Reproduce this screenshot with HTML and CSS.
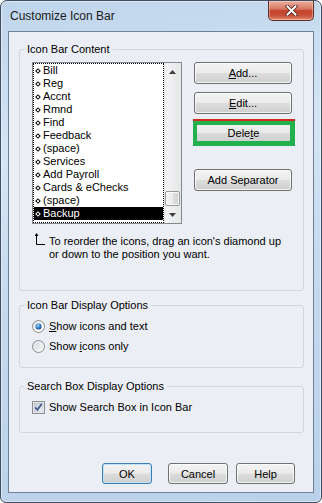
FILE: index.html
```html
<!DOCTYPE html>
<html>
<head>
<meta charset="utf-8">
<link rel="stylesheet" href="styles.css">
</head>
<body>
<div class="window">
  <div class="titlebar">
    <span class="title">Customize Icon Bar</span>
    <div class="close">
      <svg width="13" height="11" viewBox="0 0 13 11">
        <path d="M2.5 1.5 L10.5 9.5 M10.5 1.5 L2.5 9.5" stroke="#4d1e17" stroke-width="3.6" stroke-linecap="square"/>
        <path d="M2.5 1.5 L10.5 9.5 M10.5 1.5 L2.5 9.5" stroke="#ffffff" stroke-width="2" stroke-linecap="square"/>
      </svg>
    </div>
  </div>
  <div class="client">
    <fieldset class="group group-content">
      <legend>Icon Bar Content</legend>
      <div class="group-body body-content">
        <div class="content-row">
          <div class="listbox">
            <ul class="items">
              <li>Bill</li>
              <li>Reg</li>
              <li>Accnt</li>
              <li>Rmnd</li>
              <li>Find</li>
              <li>Feedback</li>
              <li>(space)</li>
              <li>Services</li>
              <li>Add Payroll</li>
              <li>Cards &amp; eChecks</li>
              <li>(space)</li>
              <li class="selected">Backup</li>
            </ul>
            <div class="scrollbar">
              <div class="sb-btn">
                <svg width="7" height="4" viewBox="0 0 7 4"><path d="M3.5 0 L7 4 L0 4 Z" fill="#3f3f3f"/></svg>
              </div>
              <div class="sb-track"><div class="sb-thumb"></div></div>
              <div class="sb-btn">
                <svg width="7" height="4" viewBox="0 0 7 4"><path d="M0 0 L7 0 L3.5 4 Z" fill="#3f3f3f"/></svg>
              </div>
            </div>
          </div>
          <div class="btn-col">
            <button class="btn btn-side"><span><u>A</u>dd...</span></button>
            <button class="btn btn-side btn-edit"><span><u>E</u>dit...</span></button>
            <div class="mark">
              <div class="mark-green">
                <div class="mark-btn">Dele<u>t</u>e</div>
              </div>
            </div>
            <button class="btn btn-side btn-sep">Add Separator</button>
          </div>
        </div>
        <div class="hint">
          <svg class="hint-icon" width="10" height="13" viewBox="0 0 10 13">
            <path d="M1.5 2.5 V11.5 H10" stroke="#000" stroke-width="1" fill="none"/>
            <path d="M1.5 0 L3.5 3 L-0.5 3 Z" fill="#000"/>
          </svg>
          <p class="hint-text">To reorder the icons, drag an icon's diamond up<br>or down to the position you want.</p>
        </div>
      </div>
    </fieldset>

    <fieldset class="group group-display">
      <legend>Icon Bar Display Options</legend>
      <div class="group-body body-display">
        <div class="opt">
          <svg width="13" height="13" viewBox="0 0 13 13">
            <defs>
              <linearGradient id="rbg1" x1="0" y1="0" x2="1" y2="1">
                <stop offset="0" stop-color="#d7d9dc"/>
                <stop offset="1" stop-color="#fbfbfb"/>
              </linearGradient>
              <radialGradient id="rdot" cx="0.4" cy="0.35" r="0.75">
                <stop offset="0" stop-color="#9fd9fb"/>
                <stop offset="0.55" stop-color="#2a7cc6"/>
                <stop offset="1" stop-color="#0f3f78"/>
              </radialGradient>
            </defs>
            <circle cx="6.5" cy="6.5" r="6" fill="url(#rbg1)" stroke="#8b8d90"/>
            <circle cx="6.5" cy="6.5" r="4.6" fill="none" stroke="#ffffff" stroke-width="0.8"/>
            <circle cx="6.5" cy="6.5" r="3" fill="url(#rdot)"/>
          </svg>
          <span class="opt-label"><u>S</u>how icons and text</span>
        </div>
        <div class="opt">
          <svg width="13" height="13" viewBox="0 0 13 13">
            <defs>
              <linearGradient id="rbg2" x1="0" y1="0" x2="1" y2="1">
                <stop offset="0" stop-color="#d2d4d7"/>
                <stop offset="1" stop-color="#fbfbfb"/>
              </linearGradient>
            </defs>
            <circle cx="6.5" cy="6.5" r="6" fill="url(#rbg2)" stroke="#8b8d90"/>
            <circle cx="6.5" cy="6.5" r="4.6" fill="none" stroke="#ffffff" stroke-width="0.8" opacity="0.6"/>
          </svg>
          <span class="opt-label">Show <u>i</u>cons only</span>
        </div>
      </div>
    </fieldset>

    <fieldset class="group group-search">
      <legend>Search Box Display Options</legend>
      <div class="group-body body-search">
        <div class="opt">
          <svg width="13" height="13" viewBox="0 0 13 13">
            <defs>
              <linearGradient id="cbg" x1="0" y1="0" x2="1" y2="1">
                <stop offset="0" stop-color="#c3c8d0"/>
                <stop offset="1" stop-color="#f2f3f5"/>
              </linearGradient>
            </defs>
            <rect x="0.5" y="0.5" width="12" height="12" fill="#f4f4f4" stroke="#8e8f92"/>
            <rect x="2" y="2" width="9" height="9" fill="url(#cbg)" stroke="#b9bec6" stroke-width="0.6"/>
            <path d="M3.2 6.4 L5.4 8.9 L9.8 2.9" stroke="#4b5c8e" stroke-width="1.8" fill="none"/>
          </svg>
          <span class="opt-label">Show Search Box in Icon Bar</span>
        </div>
      </div>
    </fieldset>

    <div class="footer">
      <button class="btn btn-foot btn-ok">OK</button>
      <button class="btn btn-foot btn-cancel">Cancel</button>
      <button class="btn btn-foot btn-help">Help</button>
    </div>
  </div>
</div>
</body>
</html>
```

FILE: styles.css
```css
html, body {
  margin: 0;
  padding: 0;
  background: #ffffff;
}

body {
  font-family: "Liberation Sans", Arial, sans-serif;
  font-size: 11px;
  color: #000;
}

.window {
  width: 322px;
  height: 503px;
  box-sizing: border-box;
  border: 1px solid #3f4e61;
  border-radius: 7px 7px 6px 6px;
  padding: 0 7px 9px 7px;
  background: linear-gradient(172deg, #bfd5ec 0%, #d5e5f5 30%, #c6daee 55%, #bad1ea 100%);
  box-shadow: inset 0 0 0 1px rgba(255, 255, 255, 0.45);
  display: flex;
  flex-direction: column;
  overflow: hidden;
}

.titlebar {
  height: 30px;
  flex-shrink: 0;
  display: flex;
  align-items: flex-start;
}

.title {
  font-size: 12px;
  line-height: 15px;
  margin: 8px 0 0 2px;
  color: #1a1a1a;
}

.close {
  margin-left: auto;
  width: 46px;
  height: 20px;
  box-sizing: border-box;
  border: 1px solid #5e2c25;
  border-top: none;
  border-radius: 0 0 5px 5px;
  background: linear-gradient(#eab0a2 0%, #d7765f 42%, #c2412a 52%, #c9503a 78%, #e08f75 100%);
  box-shadow: inset 0 0 0 1px rgba(255, 220, 210, 0.45);
  display: flex;
  align-items: center;
  justify-content: center;
}

.client {
  flex: 1;
  border: 1px solid #6f8197;
  background: #ebeef4;
  display: flex;
  flex-direction: column;
}

.group {
  margin: 0 9px 0 10px;
  padding: 0;
  border: 1px solid #d0d7df;
  border-radius: 3px;
  min-width: 0;
}

.group legend {
  margin-left: 4px;
  padding: 0 3px;
  line-height: 13px;
  height: 13px;
}

.group-content { margin-top: 11px; }
.group-display { margin-top: 8px; }
.group-search { margin-top: 12px; }

.body-content { padding: 6px 0 29px 12px; }
.body-display { padding: 4px 0 11px 12px; }
.body-search { padding: 4px 0 15px 12px; }

.content-row {
  display: flex;
  align-items: flex-start;
}

.listbox {
  width: 150px;
  height: 162px;
  box-sizing: border-box;
  border: 1px solid #828790;
  background: #fff;
  display: flex;
}

.items {
  flex: 1;
  margin: 0;
  padding: 0;
  list-style: none;
  border: 1px dotted #000;
}

.items li {
  height: 13px;
  line-height: 13px;
  display: flex;
  align-items: center;
  white-space: nowrap;
}

.items li::before {
  content: "";
  width: 2px;
  height: 2px;
  border: 1px solid currentColor;
  transform: rotate(45deg);
  margin: 0 3px 0 2px;
  flex-shrink: 0;
}

.items li.selected {
  background: #000;
  color: #fff;
}

.scrollbar {
  width: 17px;
  display: flex;
  flex-direction: column;
  background: linear-gradient(to right, #e2e3e5 0%, #f4f4f5 15%, #ebecee 60%, #e6e7e9 100%);
}

.sb-btn {
  height: 17px;
  flex-shrink: 0;
  display: flex;
  align-items: center;
  justify-content: center;
}

.sb-track {
  flex: 1;
  display: flex;
  flex-direction: column;
  justify-content: flex-end;
}

.sb-thumb {
  height: 15px;
  margin: 0 1px;
  box-sizing: border-box;
  border: 1px solid #9a9a9a;
  border-radius: 2px;
  background: linear-gradient(to right, #f4f4f4 0%, #ececec 50%, #dedede 51%, #d2d2d2 100%);
  box-shadow: inset 0 0 0 1px rgba(255, 255, 255, 0.8);
}

.btn-col {
  margin-left: 12px;
  width: 98px;
  display: flex;
  flex-direction: column;
}

.btn {
  box-sizing: border-box;
  margin: 0;
  padding: 0;
  border: 1px solid #707070;
  border-radius: 3px;
  background: linear-gradient(#f3f3f3 0%, #ebebeb 48%, #dddddd 52%, #cfcfcf 100%);
  box-shadow: inset 0 0 0 1px rgba(255, 255, 255, 0.75);
  font-family: inherit;
  font-size: 11px;
  color: #000;
  display: flex;
  align-items: center;
  justify-content: center;
}

.btn-side {
  width: 98px;
  height: 22px;
}

.btn-edit { margin-top: 8px; }
.btn-sep { margin-top: 23px; }

.mark {
  margin: 5px 0 0 -1px;
  width: 102px;
  border-top: 2px solid #d42a1e;
}

.mark-green {
  border: 4px solid #22b14c;
  border-right-width: 5px;
  border-bottom-width: 5px;
}

.mark-btn {
  height: 16px;
  line-height: 16px;
  text-align: center;
  background: linear-gradient(#f0f0f0 0%, #e9e9e9 50%, #dadada 52%, #d0d0d0 100%);
}

.hint {
  margin-top: 11px;
  display: flex;
  align-items: flex-start;
}

.hint-icon {
  margin: -2px 4px 0 3px;
  flex-shrink: 0;
}

.hint-text {
  margin: 0;
  line-height: 13px;
  white-space: nowrap;
}

.opt {
  height: 20px;
  display: flex;
  align-items: center;
}

.opt svg { flex-shrink: 0; }

.opt-label {
  margin-left: 4px;
  line-height: 13px;
}

.footer {
  margin-top: 30px;
  padding-right: 18px;
  display: flex;
  justify-content: flex-end;
}

.btn-foot { height: 21px; }

.btn-ok {
  width: 50px;
  margin-right: 16px;
  border-color: #3c7fb1;
  box-shadow: inset 0 0 0 1px #bfe3f8;
}

.btn-cancel {
  width: 60px;
  margin-right: 8px;
}

.btn-help { width: 59px; }
```
